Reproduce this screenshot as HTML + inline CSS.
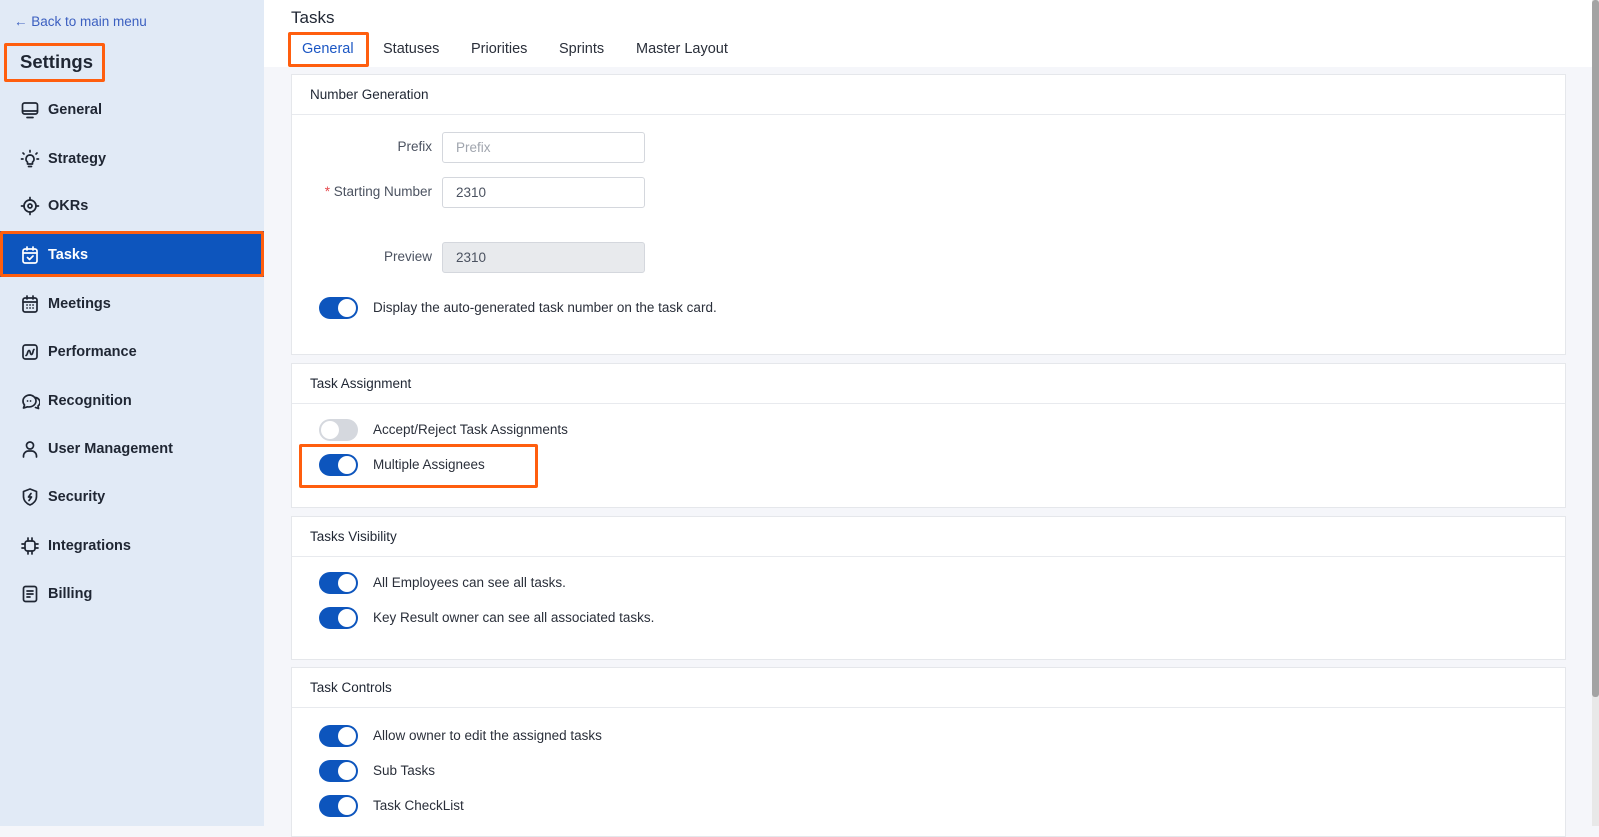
<!DOCTYPE html>
<html><head><meta charset="utf-8"><style>
*{box-sizing:border-box;margin:0;padding:0}
body{width:1599px;height:826px;overflow:hidden;font-family:"Liberation Sans",sans-serif;background:#f5f6fa;position:relative;color:#1f2937}
.abs{position:absolute}
#side{left:0;top:0;width:264px;height:826px;background:#e1eaf6}
.nav{position:absolute;left:20px;height:24px;display:flex;align-items:center;font-size:14.5px;font-weight:bold;color:#1f2633}
.nav svg{width:20px;height:20px;margin-right:8px;fill:none;stroke:#1f2633;stroke-width:1.7;stroke-linecap:round;stroke-linejoin:round}
#hdr{left:264px;top:0;width:1328px;height:67px;background:#fff}
.tab{position:absolute;top:41px;font-size:14.5px;color:#2a2f3a}
.card{position:absolute;left:291px;width:1275px;background:#fff;border:1px solid #e5e7eb}
.ch{height:40px;border-bottom:1px solid #e8eaee;padding-left:18px;font-size:13.5px;display:flex;align-items:center;color:#1f2633}
.tg{position:absolute;left:27px;width:39px;height:22px;border-radius:11px;background:#0d55bd}
.tg::after{content:"";position:absolute;right:2px;top:2px;width:18px;height:18px;border-radius:50%;background:#fff}
.tg.off{background:#d5d8de}.tg.off::after{right:auto;left:2px}
.tl{position:absolute;left:81px;font-size:13.5px;color:#2a2f3a;line-height:16px}
.lbl{position:absolute;font-size:13.5px;color:#4b5260;text-align:right;width:150px;left:-10px}
.inp{position:absolute;left:150px;width:203px;height:31px;border:1px solid #d4d7dd;border-radius:3px;font-size:13.5px;padding-left:13px;display:flex;align-items:center;color:#4b5260}
.ob{position:absolute;border:3px solid #ff5e0e;border-radius:2px}
</style></head><body>
<div id="side" class="abs"></div>
<div class="abs" style="left:14px;top:14px;font-size:13.5px;color:#3b5fc0">← Back to main menu</div>
<div class="abs" style="left:20px;top:51px;font-size:18.5px;font-weight:bold;color:#1f2633">Settings</div>
<div class="ob" style="left:4px;top:43px;width:101px;height:39px"></div>

<div class="nav" style="top:98px"><svg viewBox="0 0 20 20"><rect x="2.5" y="3" width="15" height="11" rx="2"/><path d="M2.5 11h15M7 17.5h6"/></svg>General</div>
<div class="nav" style="top:147px"><svg viewBox="0 0 20 20"><path d="M10 6a4 4 0 0 0-2.5 7.1V15h5v-1.9A4 4 0 0 0 10 6zM8.5 17.5h3M10 1.5v1.5M3 4l1 1M17 4l-1 1M1.5 10h1.5M17 10h1.5"/></svg>Strategy</div>
<div class="nav" style="top:194px"><svg viewBox="0 0 20 20"><circle cx="10" cy="10" r="6"/><circle cx="10" cy="10" r="2"/><path d="M10 1.5v2.5M10 16v2.5M1.5 10h2.5M16 10h2.5"/></svg>OKRs</div>
<div class="abs" style="left:0;top:231px;width:264px;height:46px;background:#0d55bd"></div>
<div class="ob" style="left:0;top:231px;width:264px;height:46px"></div>
<div class="nav" style="top:243px;color:#fff"><svg viewBox="0 0 20 20" style="stroke:#fff"><rect x="3" y="4" width="14" height="14" rx="2"/><path d="M3 8h14M7 2v3M13 2v3M7.5 12.5l2 2 3.5-3.5"/></svg>Tasks</div>
<div class="nav" style="top:292px"><svg viewBox="0 0 20 20"><rect x="3" y="4" width="14" height="14" rx="2"/><path d="M3 8h14M7 2v3M13 2v3M7 11h.1M10 11h.1M13 11h.1M7 14h.1M10 14h.1M13 14h.1"/></svg>Meetings</div>
<div class="nav" style="top:340px"><svg viewBox="0 0 20 20"><rect x="3" y="3" width="14" height="14" rx="2.5"/><path d="M6 13.5c1.5 0 1.5-5 3-5s1 4 2.5 4 1.5-5 2.5-5"/></svg>Performance</div>
<div class="nav" style="top:389px"><svg viewBox="0 0 20 20"><path d="M10 4a7 6 0 0 0-7 6c0 1.5.6 3 1.5 4L3.5 17l4-1.2A7 6 0 1 0 10 4zM15.5 6.5A6 5 0 0 1 18 15l.5 2.5-3-1"/><path d="M7.5 10h.1M10.5 10h.1"/></svg>Recognition</div>
<div class="nav" style="top:437px"><svg viewBox="0 0 20 20"><circle cx="10" cy="6.5" r="3.5"/><path d="M3.5 18v-1a5 5 0 0 1 5-5h3a5 5 0 0 1 5 5v1"/></svg>User Management</div>
<div class="nav" style="top:485px"><svg viewBox="0 0 20 20"><path d="M10 2l6.5 2.5v5c0 4-3 7-6.5 8.5C6.5 16.5 3.5 13.5 3.5 9.5v-5z"/><path d="M11 6.5l-2.5 3.5h3L9 13.5"/></svg>Security</div>
<div class="nav" style="top:534px"><svg viewBox="0 0 20 20"><rect x="5" y="5" width="10" height="10" rx="2.5"/><path d="M8 2v3M12 2v3M8 15v3M12 15v3M2 8h3M2 12h3M15 8h3M15 12h3"/></svg>Integrations</div>
<div class="nav" style="top:582px"><svg viewBox="0 0 20 20"><rect x="3.5" y="2.5" width="13" height="15" rx="2"/><path d="M7 7h6M7 10h6M7 13h3"/></svg>Billing</div>

<div id="hdr" class="abs"></div>
<div class="abs" style="left:291px;top:8px;font-size:17px;color:#1f2633">Tasks</div>
<div class="tab" style="left:302px;color:#1c57c4">General</div>
<div class="ob" style="left:288px;top:32px;width:81px;height:35px"></div>
<div class="tab" style="left:383px">Statuses</div>
<div class="tab" style="left:471px">Priorities</div>
<div class="tab" style="left:559px">Sprints</div>
<div class="tab" style="left:636px">Master Layout</div>

<div class="card" style="top:74px;height:281px">
<div class="ch">Number Generation</div>
<div class="lbl" style="top:64px">Prefix</div>
<div class="inp" style="top:57px;color:#a0a5ae">Prefix</div>
<div class="lbl" style="top:109px"><span style="color:#e5484d">* </span>Starting Number</div>
<div class="inp" style="top:102px">2310</div>
<div class="lbl" style="top:174px">Preview</div>
<div class="inp" style="top:167px;background:#e8eaed">2310</div>
<div class="tg" style="top:222px"></div><div class="tl" style="top:225px">Display the auto-generated task number on the task card.</div>
</div>

<div class="card" style="top:363px;height:145px">
<div class="ch">Task Assignment</div>
<div class="tg off" style="top:55px"></div><div class="tl" style="top:58px">Accept/Reject Task Assignments</div>
<div class="tg" style="top:90px"></div><div class="tl" style="top:93px">Multiple Assignees</div>
</div>
<div class="ob" style="left:299px;top:444px;width:239px;height:44px"></div>

<div class="card" style="top:516px;height:144px">
<div class="ch">Tasks Visibility</div>
<div class="tg" style="top:55px"></div><div class="tl" style="top:58px">All Employees can see all tasks.</div>
<div class="tg" style="top:90px"></div><div class="tl" style="top:93px">Key Result owner can see all associated tasks.</div>
</div>

<div class="card" style="top:667px;height:170px">
<div class="ch">Task Controls</div>
<div class="tg" style="top:57px"></div><div class="tl" style="top:60px">Allow owner to edit the assigned tasks</div>
<div class="tg" style="top:92px"></div><div class="tl" style="top:95px">Sub Tasks</div>
<div class="tg" style="top:127px"></div><div class="tl" style="top:130px">Task CheckList</div>
</div>

<div class="abs" style="left:1592px;top:0;width:7px;height:826px;background:#e8e8e8"></div>
<div class="abs" style="left:1592px;top:0;width:7px;height:697px;background:#a3a3a3;border-radius:3px"></div>
</body></html>
